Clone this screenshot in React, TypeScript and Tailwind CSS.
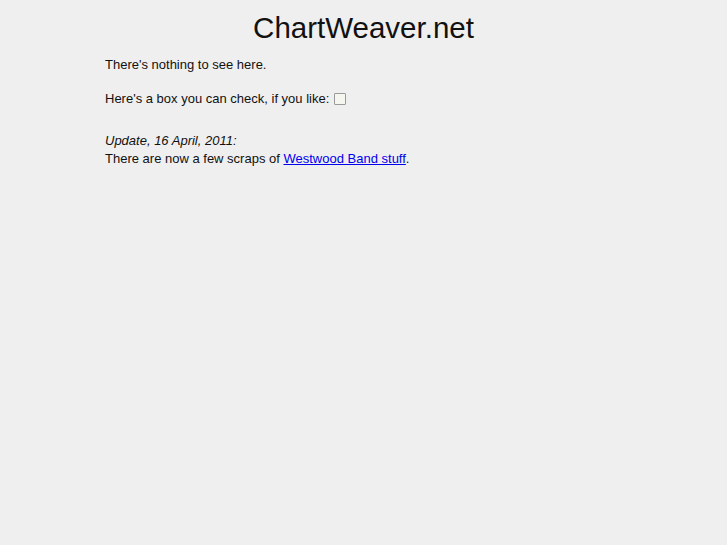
export default function App() {
  return (
    <div className="min-h-[545px] bg-[#efefef] text-[#111] font-['Liberation_Sans',Arial,sans-serif]">
      <h1 className="pt-[10px] text-center text-[29.5px] leading-[36px] text-[#111]">ChartWeaver.net</h1>
      <div className="mx-[105px] mt-[10px] text-[13px] leading-[18px]">
        <p>There's nothing to see here.</p>
        <p className="mt-[16px] flex items-center">
          Here's a box you can check, if you like:
          <span className="ml-[5px] inline-block h-[12px] w-[12px] border border-[#9a9a9a] bg-[#f6f6f0] rounded-[1px]" />
        </p>
        <p className="mt-[24px] italic">Update, 16 April, 2011:</p>
        <p>
          There are now a few scraps of{" "}
          <a href="#" className="text-[#0000ee] underline">Westwood Band stuff</a>.
        </p>
      </div>
    </div>
  );
}
